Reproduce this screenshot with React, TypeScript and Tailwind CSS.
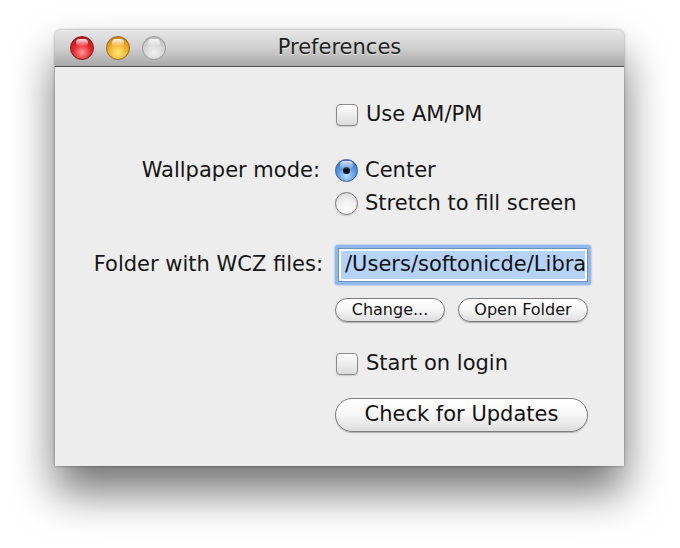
import React from 'react';

const font = "font-['DejaVu_Sans','Liberation_Sans',sans-serif]";

function TrafficLight({ color }: { color: 'red' | 'orange' | 'grey' }) {
  const bg =
    color === 'red'
      ? 'bg-[radial-gradient(circle_at_50%_70%,#ff9a9a_0%,#e8282e_45%,#a40b12_100%)] border-[#8a1a1a]'
      : color === 'orange'
        ? 'bg-[radial-gradient(circle_at_50%_72%,#fff07a_0%,#f5b230_45%,#b86a08_100%)] border-[#9a6a1a]'
        : 'bg-[radial-gradient(circle_at_50%_70%,#f2f2f2_0%,#d4d4d4_50%,#a8a8a8_100%)] border-[#9a9a9a]';
  return (
    <div className={`relative w-[24px] h-[24px] rounded-full border ${bg}`}>
      <div className="absolute left-[5px] top-[2px] w-[12px] h-[7px] rounded-full bg-gradient-to-b from-white/90 to-white/10" />
    </div>
  );
}

function Checkbox() {
  return (
    <div className="w-[22px] h-[22px] rounded-[4px] border border-[#8a8a8a] bg-gradient-to-b from-[#fdfdfd] to-[#dcdcdc] shadow-[0_1px_1px_rgba(0,0,0,0.15)]" />
  );
}

function Radio({ checked }: { checked?: boolean }) {
  if (checked) {
    return (
      <div className="relative w-[23px] h-[23px] rounded-full border border-[#3d5f93] bg-[radial-gradient(circle_at_50%_75%,#b8e0ff_0%,#5a9be6_45%,#2c62b8_100%)] flex items-center justify-center">
        <div className="absolute left-[4px] top-[1px] w-[13px] h-[8px] rounded-full bg-gradient-to-b from-white/80 to-white/10" />
        <div className="w-[7px] h-[7px] rounded-full bg-[#111]" />
      </div>
    );
  }
  return (
    <div className="w-[23px] h-[23px] rounded-full border border-[#7a7a7a] bg-[radial-gradient(circle_at_50%_80%,#ffffff_0%,#f0f0f0_50%,#cfcfcf_100%)] shadow-[0_1px_1px_rgba(0,0,0,0.15)]" />
  );
}

function PillButton({ children, className }: { children: React.ReactNode; className: string }) {
  return (
    <div
      className={`flex items-center justify-center rounded-full border border-[#7c7c7c] bg-gradient-to-b from-[#ffffff] via-[#f6f6f6] to-[#dedede] shadow-[0_1px_1px_rgba(0,0,0,0.25)] text-[#111] ${className}`}
    >
      {children}
    </div>
  );
}

export default function App() {
  return (
    <div className={`w-[680px] h-[548px] bg-white pt-[30px] pl-[55px] ${font}`}>
      <div className="w-[569px] h-[436px] flex flex-col bg-[#ededed] rounded-t-[6px] shadow-[0_26px_44px_rgba(0,0,0,0.55),0_0_3px_rgba(0,0,0,0.4)]">
        {/* Title bar */}
        <div className="relative h-[37px] shrink-0 flex items-center rounded-t-[6px] bg-gradient-to-b from-[#e6e6e6] via-[#cfcfcf] to-[#a9a9a9] border-b border-[#515151]">
          <div className="flex items-center gap-[12px] pl-[15px]">
            <TrafficLight color="red" />
            <TrafficLight color="orange" />
            <TrafficLight color="grey" />
          </div>
          <div className="absolute inset-0 flex items-center justify-center text-[21px] text-[#222] [text-shadow:0_1px_0_rgba(255,255,255,0.6)]">
            Preferences
          </div>
        </div>

        {/* Body */}
        <div className="flex flex-col text-[21px] text-[#151515]">
          <div className="flex items-center h-[24px] mt-[36px]">
            <div className="w-[267px]" />
            <div className="ml-[14px] flex items-center gap-[8px]">
              <Checkbox />
              <span>Use AM/PM</span>
            </div>
          </div>

          <div className="flex items-center h-[33px] mt-[27px]">
            <div className="w-[265px] text-right">Wallpaper mode:</div>
            <div className="ml-[15px] flex items-center gap-[7px]">
              <Radio checked />
              <span>Center</span>
            </div>
          </div>
          <div className="flex items-center h-[33px]">
            <div className="w-[265px]" />
            <div className="ml-[15px] flex items-center gap-[7px]">
              <Radio />
              <span>Stretch to fill screen</span>
            </div>
          </div>

          <div className="flex items-center h-[40px] mt-[25px]">
            <div className="w-[268px] text-right">Folder with WCZ files:</div>
            <div className="ml-[12px] w-[256px] h-[40px] rounded-[3px] bg-[#8fb8ec] p-[3px] shadow-[0_0_2px_rgba(60,110,200,0.7)]">
              <div className="w-full h-full bg-white border border-[#6f8fb8] p-[2px] overflow-hidden">
                <div className="h-full bg-[#b5d3fa] pl-[4px] flex items-center whitespace-nowrap overflow-hidden text-[21px] text-[#111]">
                  /Users/softonicde/Library
                </div>
              </div>
            </div>
          </div>

          <div className="flex items-center h-[24px] mt-[13px]">
            <div className="w-[267px]" />
            <div className="ml-[13px] flex items-center gap-[13px] text-[16px]">
              <PillButton className="w-[110px] h-[24px]">Change...</PillButton>
              <PillButton className="w-[130px] h-[24px]">Open Folder</PillButton>
            </div>
          </div>

          <div className="flex items-center h-[22px] mt-[31px]">
            <div className="w-[267px]" />
            <div className="ml-[14px] flex items-center gap-[8px]">
              <Checkbox />
              <span>Start on login</span>
            </div>
          </div>

          <div className="flex items-center h-[34px] mt-[23px]">
            <div className="w-[267px]" />
            <PillButton className="ml-[13px] w-[253px] h-[34px]">Check for Updates</PillButton>
          </div>
        </div>
      </div>
    </div>
  );
}
